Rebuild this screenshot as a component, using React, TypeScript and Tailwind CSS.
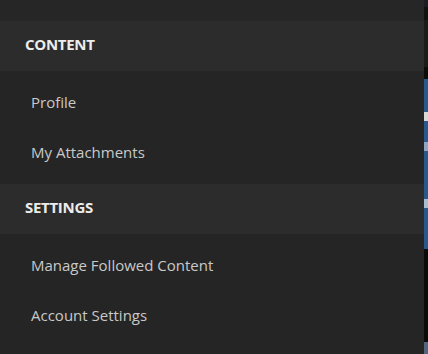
import React from 'react';

const sections = [
  { title: 'Content', items: ['Profile', 'My Attachments'] },
  { title: 'Settings', items: ['Manage Followed Content', 'Account Settings'] },
];

export default function App() {
  return (
    <div className="flex h-[354px] w-[428px] overflow-hidden bg-[#252525] font-['Open_Sans',sans-serif]">
      <nav className="flex w-[424px] shrink-0 flex-col bg-[#252525]">
        <div className="h-[21px] bg-[#262626]" />
        {sections.map((s, i) => (
          <div key={s.title}>
            <div className="flex h-[50px] items-center bg-[#2c2c2c] pb-[3px] pl-[25px] text-[15px] font-bold uppercase tracking-[-0.3px] text-[#ececec]">
              {s.title}
            </div>
            <ul className={`pt-2 ${i === 0 ? 'pb-[5px]' : 'pb-2'}`}>
              {s.items.map(item => (
                <li key={item} className="flex h-[50px] items-center pb-[3px] pl-[31px] text-[15px] text-[#c9c9c9]">
                  {item}
                </li>
              ))}
            </ul>
          </div>
        ))}
      </nav>

      {/* page behind the drawer */}
      <div className="flex flex-1 flex-col">
        <div className="h-[7px] bg-[#1d1b26]" />
        <div className="h-[13px] bg-[#111111]" />
        <div className="h-[47px] bg-[#1b1b1b]" />
        <div className="h-[12px] bg-[#0c0c0c]" />
        <div className="flex h-[170px] flex-col bg-[#28598a]">
          <div className="mt-[33px] h-[9px] bg-[#d8d8d8]" />
          <div className="mt-[21px] h-[9px] bg-[#8ea6c0]" />
          <div className="mt-[48px] h-[9px] bg-[#a9bdd1]" />
        </div>
        <div className="h-[93px] bg-[#0b0b0b]" />
        <div className="flex-1 bg-[#51667c]" />
      </div>
    </div>
  );
}
